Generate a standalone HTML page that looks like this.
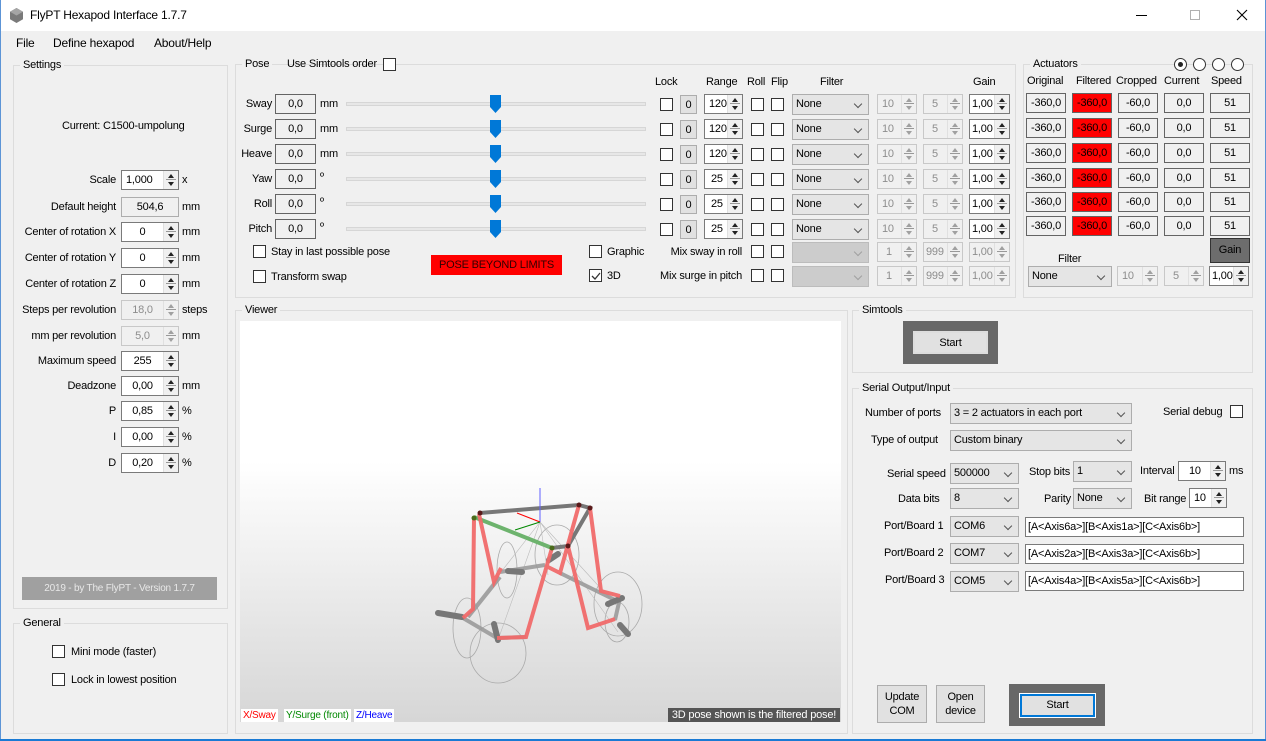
<!DOCTYPE html>
<html><head><meta charset="utf-8"><style>
*{box-sizing:border-box}
body{margin:0;width:1266px;height:741px;background:#f0f0f0;font:11px "Liberation Sans",sans-serif;letter-spacing:-0.2px;position:relative;overflow:hidden;color:#000}
.a{position:absolute;white-space:nowrap;line-height:14px}
.r{text-align:right}
.g{position:absolute;border:1px solid #dcdcdc}
.gt{position:absolute;top:-8px;left:6px;background:#f0f0f0;padding:0 3px;line-height:14px;white-space:nowrap}
.in{position:absolute;height:20px;border:1px solid #7a7a7a;background:#fff;line-height:18px;padding-left:4px;white-space:nowrap}
.c{text-align:center;padding-left:0}
.ro{background:#f0f0f0;border-color:#646464;text-align:center;padding:0}
.dis{background:#f0f0f0;border-color:#c8c8c8;color:#8d8d8d}
.sp{position:absolute;right:0;top:0;width:15px;height:18px;background:#f0f0f0;border-left:1px solid #e0e0e0}
.sp:before{content:"";position:absolute;left:4px;top:3px;border:3px solid transparent;border-bottom:4px solid #222;border-top:0}
.sp:after{content:"";position:absolute;left:4px;bottom:3px;border:3px solid transparent;border-top:4px solid #222;border-bottom:0}
.sp i{position:absolute;left:2px;right:2px;top:8px;height:1px;background:#999}
.dis .sp:before{border-bottom-color:#a0a0a0}.dis .sp:after{border-top-color:#a0a0a0}
.cb{position:absolute;width:13px;height:13px;border:1px solid #333;background:#fff}
.cmb{position:absolute;height:21px;border:1px solid #adadad;background:#e5e5e5;line-height:19px;padding-left:3px;white-space:nowrap}
.cmb:after{content:"";position:absolute;right:7px;top:6px;width:5px;height:5px;border-right:1px solid #555;border-bottom:1px solid #555;transform:rotate(45deg)}
.cmbd{background:#cccccc;border-color:#bcbcbc}
.cmbd:after{border-color:#a0a0a0}
.b0{position:absolute;width:17px;height:19px;border:1px solid #adadad;background:#e1e1e1;text-align:center;line-height:19px}
.trk{position:absolute;left:346px;width:300px;height:4px;background:#e7e7e7;border:1px solid #d6d6d6}
.th{position:absolute;left:490px}
.btn{position:absolute;border:1px solid #adadad;background:#e1e1e1;text-align:center;line-height:14px}
.rad{position:absolute;width:13px;height:13px;border:1px solid #333;border-radius:50%;background:#fff;top:58px}
</style></head><body>
<div class="a" style="left:0;top:0;width:1266px;height:31px;background:#fff"></div>
<svg class="a" style="left:9px;top:8px" width="15" height="15"><polygon points="7.5,0 14,3.8 14,11.2 7.5,15 1,11.2 1,3.8" fill="#7a7a7a"/><polygon points="7.5,0 14,3.8 7.5,7.5 1,3.8" fill="#a5a5a5"/></svg>
<div class="a" style="left:30px;top:8px;font-size:12px">FlyPT Hexapod Interface 1.7.7</div>
<div class="a" style="left:1136px;top:15px;width:11px;height:1px;background:#000"></div>
<div class="a" style="left:1190px;top:10px;width:10px;height:10px;border:1px solid #b0b0b0"></div>
<svg class="a" style="left:1236px;top:9px" width="12" height="12"><path d="M1 1L11 11M11 1L1 11" stroke="#000" stroke-width="1.1"/></svg>
<div class="a" style="left:0;top:0;width:1px;height:741px;background:#5c94d6"></div>
<div class="a" style="right:0;top:0;width:1px;height:741px;background:#5c94d6"></div>
<div class="a" style="left:0;top:739px;width:1266px;height:2px;background:#1a7ad4"></div>
<div class="a" style="left:16px;top:36px;font-size:12px">File</div>
<div class="a" style="left:53px;top:36px;font-size:12px">Define hexapod</div>
<div class="a" style="left:154px;top:36px;font-size:12px">About/Help</div>

<div class="g" style="left:13px;top:65px;width:215px;height:544px"><div class="gt">Settings</div></div>
<div class="a" style="left:62px;top:119px">Current: C1500-umpolung</div>
<div class="a r" style="left:14px;top:173px;width:102px">Scale</div>
<div class="in" style="left:121px;top:170px;width:58px">1,000<div class="sp"><i></i></div></div><div class="a" style="left:182px;top:173px">x</div>
<div class="a r" style="left:14px;top:200px;width:102px">Default height</div>
<div class="in ro" style="left:121px;top:197px;width:58px;border-color:#adadad">504,6</div><div class="a" style="left:182px;top:200px">mm</div>
<div class="a r" style="left:14px;top:225px;width:102px">Center of rotation X</div>
<div class="in c" style="left:121px;top:222px;width:58px;padding-right:15px">0<div class="sp"><i></i></div></div><div class="a" style="left:182px;top:225px">mm</div>
<div class="a r" style="left:14px;top:251px;width:102px">Center of rotation Y</div>
<div class="in c" style="left:121px;top:248px;width:58px;padding-right:15px">0<div class="sp"><i></i></div></div><div class="a" style="left:182px;top:251px">mm</div>
<div class="a r" style="left:14px;top:277px;width:102px">Center of rotation Z</div>
<div class="in c" style="left:121px;top:274px;width:58px;padding-right:15px">0<div class="sp"><i></i></div></div><div class="a" style="left:182px;top:277px">mm</div>
<div class="a r" style="left:14px;top:303px;width:102px">Steps per revolution</div>
<div class="in c dis" style="left:121px;top:300px;width:58px;padding-right:15px">18,0<div class="sp"><i></i></div></div><div class="a" style="left:182px;top:303px">steps</div>
<div class="a r" style="left:14px;top:329px;width:102px">mm per revolution</div>
<div class="in c dis" style="left:121px;top:326px;width:58px;padding-right:15px">5,0<div class="sp"><i></i></div></div><div class="a" style="left:182px;top:329px">mm</div>
<div class="a r" style="left:14px;top:354px;width:102px">Maximum speed</div>
<div class="in c" style="left:121px;top:351px;width:58px;padding-right:15px">255<div class="sp"><i></i></div></div>
<div class="a r" style="left:14px;top:379px;width:102px">Deadzone</div>
<div class="in c" style="left:121px;top:376px;width:58px;padding-right:15px">0,00<div class="sp"><i></i></div></div><div class="a" style="left:182px;top:379px">mm</div>
<div class="a r" style="left:14px;top:404px;width:102px">P</div>
<div class="in c" style="left:121px;top:401px;width:58px;padding-right:15px">0,85<div class="sp"><i></i></div></div><div class="a" style="left:182px;top:404px">%</div>
<div class="a r" style="left:14px;top:430px;width:102px">I</div>
<div class="in c" style="left:121px;top:427px;width:58px;padding-right:15px">0,00<div class="sp"><i></i></div></div><div class="a" style="left:182px;top:430px">%</div>
<div class="a r" style="left:14px;top:456px;width:102px">D</div>
<div class="in c" style="left:121px;top:453px;width:58px;padding-right:15px">0,20<div class="sp"><i></i></div></div><div class="a" style="left:182px;top:456px">%</div>
<div class="a" style="left:22px;top:577px;width:195px;height:23px;background:#a0a0a0;color:#e8e8e8;text-align:center;line-height:23px;font-size:10px">2019 - by The FlyPT - Version 1.7.7</div>

<div class="g" style="left:13px;top:623px;width:215px;height:111px"><div class="gt">General</div></div>
<div class="cb" style="left:52px;top:645px"></div><div class="a" style="left:71px;top:645px">Mini mode (faster)</div>
<div class="cb" style="left:52px;top:673px"></div><div class="a" style="left:71px;top:673px">Lock in lowest position</div>

<div class="g" style="left:235px;top:64px;width:781px;height:234px"><div class="gt">Pose</div></div>
<div class="a" style="left:287px;top:57px">Use Simtools order</div>
<div class="cb" style="left:383px;top:58px"></div>
<div class="a" style="left:655px;top:75px">Lock</div>
<div class="a" style="left:706px;top:75px">Range</div>
<div class="a" style="left:747px;top:75px">Roll</div>
<div class="a" style="left:771px;top:75px">Flip</div>
<div class="a" style="left:820px;top:75px">Filter</div>
<div class="a" style="left:973px;top:75px">Gain</div>

<div class="a r" style="left:235px;top:97px;width:37px">Sway</div>
<div class="in ro" style="left:275px;top:94px;width:41px">0,0</div><div class="a" style="left:320px;top:97px">mm</div>
<div class="trk" style="top:102px"></div>
<svg class="th" style="top:95px" width="11" height="18"><path d="M0 0H11V12L5.5 18L0 12Z" fill="#0078d7"/></svg>
<div class="cb" style="left:660px;top:98px"></div><div class="b0" style="left:680px;top:95px">0</div>
<div class="in" style="left:704px;top:94px;width:39px">120<div class="sp"><i></i></div></div>
<div class="cb" style="left:751px;top:98px"></div><div class="cb" style="left:771px;top:98px"></div>
<div class="cmb" style="left:792px;top:94px;width:77px">None</div>
<div class="in dis" style="left:877px;top:94px;width:40px">10<div class="sp"><i></i></div></div>
<div class="in dis" style="left:923px;top:94px;width:40px;padding-left:8px">5<div class="sp"><i></i></div></div>
<div class="in" style="left:969px;top:94px;width:41px;padding-left:2px">1,00<div class="sp"><i></i></div></div>

<div class="a r" style="left:235px;top:122px;width:37px">Surge</div>
<div class="in ro" style="left:275px;top:119px;width:41px">0,0</div><div class="a" style="left:320px;top:122px">mm</div>
<div class="trk" style="top:127px"></div>
<svg class="th" style="top:120px" width="11" height="18"><path d="M0 0H11V12L5.5 18L0 12Z" fill="#0078d7"/></svg>
<div class="cb" style="left:660px;top:123px"></div><div class="b0" style="left:680px;top:120px">0</div>
<div class="in" style="left:704px;top:119px;width:39px">120<div class="sp"><i></i></div></div>
<div class="cb" style="left:751px;top:123px"></div><div class="cb" style="left:771px;top:123px"></div>
<div class="cmb" style="left:792px;top:119px;width:77px">None</div>
<div class="in dis" style="left:877px;top:119px;width:40px">10<div class="sp"><i></i></div></div>
<div class="in dis" style="left:923px;top:119px;width:40px;padding-left:8px">5<div class="sp"><i></i></div></div>
<div class="in" style="left:969px;top:119px;width:41px;padding-left:2px">1,00<div class="sp"><i></i></div></div>

<div class="a r" style="left:235px;top:147px;width:37px">Heave</div>
<div class="in ro" style="left:275px;top:144px;width:41px">0,0</div><div class="a" style="left:320px;top:147px">mm</div>
<div class="trk" style="top:152px"></div>
<svg class="th" style="top:145px" width="11" height="18"><path d="M0 0H11V12L5.5 18L0 12Z" fill="#0078d7"/></svg>
<div class="cb" style="left:660px;top:148px"></div><div class="b0" style="left:680px;top:145px">0</div>
<div class="in" style="left:704px;top:144px;width:39px">120<div class="sp"><i></i></div></div>
<div class="cb" style="left:751px;top:148px"></div><div class="cb" style="left:771px;top:148px"></div>
<div class="cmb" style="left:792px;top:144px;width:77px">None</div>
<div class="in dis" style="left:877px;top:144px;width:40px">10<div class="sp"><i></i></div></div>
<div class="in dis" style="left:923px;top:144px;width:40px;padding-left:8px">5<div class="sp"><i></i></div></div>
<div class="in" style="left:969px;top:144px;width:41px;padding-left:2px">1,00<div class="sp"><i></i></div></div>

<div class="a r" style="left:235px;top:172px;width:37px">Yaw</div>
<div class="in ro" style="left:275px;top:169px;width:41px">0,0</div><div class="a" style="left:320px;top:170px">º</div>
<div class="trk" style="top:177px"></div>
<svg class="th" style="top:170px" width="11" height="18"><path d="M0 0H11V12L5.5 18L0 12Z" fill="#0078d7"/></svg>
<div class="cb" style="left:660px;top:173px"></div><div class="b0" style="left:680px;top:170px">0</div>
<div class="in" style="left:704px;top:169px;width:39px;padding-left:6px">25<div class="sp"><i></i></div></div>
<div class="cb" style="left:751px;top:173px"></div><div class="cb" style="left:771px;top:173px"></div>
<div class="cmb" style="left:792px;top:169px;width:77px">None</div>
<div class="in dis" style="left:877px;top:169px;width:40px">10<div class="sp"><i></i></div></div>
<div class="in dis" style="left:923px;top:169px;width:40px;padding-left:8px">5<div class="sp"><i></i></div></div>
<div class="in" style="left:969px;top:169px;width:41px;padding-left:2px">1,00<div class="sp"><i></i></div></div>

<div class="a r" style="left:235px;top:197px;width:37px">Roll</div>
<div class="in ro" style="left:275px;top:194px;width:41px">0,0</div><div class="a" style="left:320px;top:195px">º</div>
<div class="trk" style="top:202px"></div>
<svg class="th" style="top:195px" width="11" height="18"><path d="M0 0H11V12L5.5 18L0 12Z" fill="#0078d7"/></svg>
<div class="cb" style="left:660px;top:198px"></div><div class="b0" style="left:680px;top:195px">0</div>
<div class="in" style="left:704px;top:194px;width:39px;padding-left:6px">25<div class="sp"><i></i></div></div>
<div class="cb" style="left:751px;top:198px"></div><div class="cb" style="left:771px;top:198px"></div>
<div class="cmb" style="left:792px;top:194px;width:77px">None</div>
<div class="in dis" style="left:877px;top:194px;width:40px">10<div class="sp"><i></i></div></div>
<div class="in dis" style="left:923px;top:194px;width:40px;padding-left:8px">5<div class="sp"><i></i></div></div>
<div class="in" style="left:969px;top:194px;width:41px;padding-left:2px">1,00<div class="sp"><i></i></div></div>

<div class="a r" style="left:235px;top:222px;width:37px">Pitch</div>
<div class="in ro" style="left:275px;top:219px;width:41px">0,0</div><div class="a" style="left:320px;top:220px">º</div>
<div class="trk" style="top:227px"></div>
<svg class="th" style="top:220px" width="11" height="18"><path d="M0 0H11V12L5.5 18L0 12Z" fill="#0078d7"/></svg>
<div class="cb" style="left:660px;top:223px"></div><div class="b0" style="left:680px;top:220px">0</div>
<div class="in" style="left:704px;top:219px;width:39px;padding-left:6px">25<div class="sp"><i></i></div></div>
<div class="cb" style="left:751px;top:223px"></div><div class="cb" style="left:771px;top:223px"></div>
<div class="cmb" style="left:792px;top:219px;width:77px">None</div>
<div class="in dis" style="left:877px;top:219px;width:40px">10<div class="sp"><i></i></div></div>
<div class="in dis" style="left:923px;top:219px;width:40px;padding-left:8px">5<div class="sp"><i></i></div></div>
<div class="in" style="left:969px;top:219px;width:41px;padding-left:2px">1,00<div class="sp"><i></i></div></div>

<div class="cb" style="left:253px;top:245px"></div><div class="a" style="left:271px;top:245px">Stay in last possible pose</div>
<div class="cb" style="left:253px;top:270px"></div><div class="a" style="left:271px;top:270px">Transform swap</div>
<div class="a" style="left:431px;top:255px;width:131px;height:20px;background:#ff0000;color:#300;text-align:center;line-height:20px">POSE BEYOND LIMITS</div>
<div class="cb" style="left:589px;top:245px"></div><div class="a" style="left:607px;top:245px">Graphic</div>
<div class="cb" style="left:589px;top:269px"></div>
<svg class="a" style="left:590px;top:270px" width="12" height="12"><path d="M2 6L5 9L10 3" stroke="#333" stroke-width="1.3" fill="none"/></svg>
<div class="a" style="left:607px;top:269px">3D</div>
<div class="a r" style="left:640px;top:245px;width:102px">Mix sway in roll</div>
<div class="cb" style="left:751px;top:245px"></div><div class="cb" style="left:771px;top:245px"></div>
<div class="cmb cmbd" style="left:792px;top:242px;width:77px"></div>
<div class="in dis" style="left:877px;top:242px;width:40px;padding-left:8px">1<div class="sp"><i></i></div></div>
<div class="in dis" style="left:923px;top:242px;width:40px;padding-left:2px">999<div class="sp"><i></i></div></div>
<div class="in dis" style="left:969px;top:242px;width:41px;padding-left:2px">1,00<div class="sp"><i></i></div></div>
<div class="a r" style="left:640px;top:269px;width:102px">Mix surge in pitch</div>
<div class="cb" style="left:751px;top:269px"></div><div class="cb" style="left:771px;top:269px"></div>
<div class="cmb cmbd" style="left:792px;top:266px;width:77px"></div>
<div class="in dis" style="left:877px;top:266px;width:40px;padding-left:8px">1<div class="sp"><i></i></div></div>
<div class="in dis" style="left:923px;top:266px;width:40px;padding-left:2px">999<div class="sp"><i></i></div></div>
<div class="in dis" style="left:969px;top:266px;width:41px;padding-left:2px">1,00<div class="sp"><i></i></div></div>

<div class="g" style="left:1023px;top:64px;width:230px;height:234px"><div class="gt">Actuators</div></div>
<div class="rad" style="left:1174px"></div><div class="a" style="left:1178px;top:62px;width:5px;height:5px;border-radius:50%;background:#222"></div>
<div class="rad" style="left:1193px"></div><div class="rad" style="left:1212px"></div><div class="rad" style="left:1231px"></div>
<div class="a" style="left:1027px;top:74px">Original</div>
<div class="a" style="left:1076px;top:74px">Filtered</div>
<div class="a" style="left:1116px;top:74px">Cropped</div>
<div class="a" style="left:1164px;top:74px">Current</div>
<div class="a" style="left:1211px;top:74px">Speed</div>

<div class="in ro" style="left:1026px;top:93px;width:40px">-360,0</div><div class="in ro" style="left:1072px;top:93px;width:40px;background:#f00">-360,0</div><div class="in ro" style="left:1118px;top:93px;width:40px">-60,0</div><div class="in ro" style="left:1164px;top:93px;width:40px">0,0</div><div class="in ro" style="left:1210px;top:93px;width:40px">51</div>
<div class="in ro" style="left:1026px;top:118px;width:40px">-360,0</div><div class="in ro" style="left:1072px;top:118px;width:40px;background:#f00">-360,0</div><div class="in ro" style="left:1118px;top:118px;width:40px">-60,0</div><div class="in ro" style="left:1164px;top:118px;width:40px">0,0</div><div class="in ro" style="left:1210px;top:118px;width:40px">51</div>
<div class="in ro" style="left:1026px;top:143px;width:40px">-360,0</div><div class="in ro" style="left:1072px;top:143px;width:40px;background:#f00">-360,0</div><div class="in ro" style="left:1118px;top:143px;width:40px">-60,0</div><div class="in ro" style="left:1164px;top:143px;width:40px">0,0</div><div class="in ro" style="left:1210px;top:143px;width:40px">51</div>
<div class="in ro" style="left:1026px;top:168px;width:40px">-360,0</div><div class="in ro" style="left:1072px;top:168px;width:40px;background:#f00">-360,0</div><div class="in ro" style="left:1118px;top:168px;width:40px">-60,0</div><div class="in ro" style="left:1164px;top:168px;width:40px">0,0</div><div class="in ro" style="left:1210px;top:168px;width:40px">51</div>
<div class="in ro" style="left:1026px;top:192px;width:40px">-360,0</div><div class="in ro" style="left:1072px;top:192px;width:40px;background:#f00">-360,0</div><div class="in ro" style="left:1118px;top:192px;width:40px">-60,0</div><div class="in ro" style="left:1164px;top:192px;width:40px">0,0</div><div class="in ro" style="left:1210px;top:192px;width:40px">51</div>
<div class="in ro" style="left:1026px;top:216px;width:40px">-360,0</div><div class="in ro" style="left:1072px;top:216px;width:40px;background:#f00">-360,0</div><div class="in ro" style="left:1118px;top:216px;width:40px">-60,0</div><div class="in ro" style="left:1164px;top:216px;width:40px">0,0</div><div class="in ro" style="left:1210px;top:216px;width:40px">51</div>
<div class="a" style="left:1210px;top:238px;width:40px;height:25px;background:#6d6d6d;border:1px solid #333;text-align:center;line-height:23px">Gain</div>
<div class="a" style="left:1058px;top:252px">Filter</div>
<div class="cmb" style="left:1028px;top:266px;width:84px">None</div>
<div class="in dis" style="left:1117px;top:266px;width:41px">10<div class="sp"><i></i></div></div>
<div class="in dis" style="left:1164px;top:266px;width:40px;padding-left:8px">5<div class="sp"><i></i></div></div>
<div class="in" style="left:1209px;top:266px;width:40px;padding-left:2px">1,00<div class="sp"><i></i></div></div>

<div class="g" style="left:235px;top:310px;width:613px;height:424px"><div class="gt">Viewer</div></div>
<div class="a" style="left:240px;top:321px;width:601px;height:401px;background:linear-gradient(#fff 0%,#fff 35%,#d6d6d6 100%)"></div>
<svg class="a" style="left:240px;top:321px" width="601" height="401" viewBox="240 321 601 401">
<g fill="none" stroke="#aaa" stroke-width="0.8">
<ellipse cx="507" cy="570" rx="10" ry="28"/><ellipse cx="467" cy="628" rx="14" ry="30"/><ellipse cx="498" cy="653" rx="28" ry="30"/>
<ellipse cx="557" cy="555" rx="22" ry="30"/><ellipse cx="618" cy="604" rx="24" ry="32"/><ellipse cx="617" cy="622" rx="12" ry="20"/>
</g>
<g stroke="#bbb" stroke-width="0.6"><path d="M540 522L466 617M540 522L498 640M540 522L505 567M540 522L548 575M540 522L616 605M540 522L618 632"/></g>
<g stroke="#9a9a9a" stroke-width="4" opacity="0.9" fill="none"><path d="M468 617L500 577M500 572L545 565M560 573L615 600M620 598L615 620M498 638L526 637M463 618L497 638"/></g>
<g stroke="#777" stroke-width="6" stroke-linecap="round"><path d="M438 613L462 617M494 624L498 640M508 571L522 572M549 560L558 554M608 604L622 598M620 625L628 634"/></g>
<g stroke="#777" stroke-width="4" fill="none"><path d="M480 513L579 505L590 508L568 546L552 548"/></g>
<path d="M474 517L552 548" stroke="#6db36d" stroke-width="4"/>
<g stroke="#f06a6a" stroke-width="4" fill="none" opacity="0.95"><path d="M479 514L494 582L501 568M474 518L473 609L463 618M552 548L526 637L497 638M568 546L588 628L615 619M590 508L601 591L620 596M579 505L560 573L546 566"/></g>
<path d="M540 488V522" stroke="#6060ff" stroke-width="1"/><path d="M517 513L540 522" stroke="#f00" stroke-width="1"/><path d="M515 530L540 522" stroke="#080" stroke-width="1"/>
<g fill="#5a1a1a"><circle cx="480" cy="513" r="2.5"/><circle cx="579" cy="505" r="2.5"/><circle cx="590" cy="508" r="2.5"/><circle cx="568" cy="546" r="2.5"/></g>
<g fill="#4a6a1a"><circle cx="474" cy="518" r="2.5"/><circle cx="552" cy="548" r="2.5"/></g>
</svg>
<div class="a" style="left:241px;top:709px;background:#fff;color:#f00;font-size:10px;line-height:13px;padding:0 2px">X/Sway</div>
<div class="a" style="left:284px;top:709px;background:#fff;color:#080;font-size:10px;line-height:13px;padding:0 2px">Y/Surge (front)</div>
<div class="a" style="left:354px;top:709px;background:#fff;color:#00f;font-size:10px;line-height:13px;padding:0 2px">Z/Heave</div>
<div class="a" style="left:668px;top:708px;width:172px;background:#555;color:#fff;font-size:11px;line-height:14px;text-align:center">3D pose shown is the filtered pose!</div>

<div class="g" style="left:852px;top:310px;width:401px;height:63px"><div class="gt">Simtools</div></div>
<div class="a" style="left:903px;top:321px;width:95px;height:43px;background:#686868"></div>
<div class="btn" style="left:913px;top:331px;width:75px;height:23px;line-height:21px;border:2px solid #ddd">Start</div>

<div class="g" style="left:852px;top:388px;width:401px;height:346px"><div class="gt">Serial Output/Input</div></div>
<div class="a" style="left:865px;top:406px">Number of ports</div>
<div class="cmb" style="left:950px;top:403px;width:182px">3 = 2 actuators in each port</div>
<div class="a" style="left:1163px;top:405px">Serial debug</div><div class="cb" style="left:1230px;top:405px"></div>
<div class="a" style="left:871px;top:433px">Type of output</div>
<div class="cmb" style="left:950px;top:430px;width:182px">Custom binary</div>
<div class="a" style="left:887px;top:467px">Serial speed</div>
<div class="cmb" style="left:950px;top:463px;width:69px">500000</div>
<div class="a" style="left:1029px;top:465px">Stop bits</div>
<div class="cmb" style="left:1073px;top:461px;width:59px">1</div>
<div class="a" style="left:1140px;top:464px">Interval</div>
<div class="in" style="left:1178px;top:461px;width:48px;padding-left:10px">10<div class="sp"><i></i></div></div>
<div class="a" style="left:1229px;top:464px">ms</div>
<div class="a" style="left:898px;top:492px">Data bits</div>
<div class="cmb" style="left:950px;top:488px;width:69px">8</div>
<div class="a" style="left:1044px;top:492px">Parity</div>
<div class="cmb" style="left:1073px;top:488px;width:59px">None</div>
<div class="a" style="left:1144px;top:492px">Bit range</div>
<div class="in" style="left:1189px;top:488px;width:38px;padding-left:4px">10<div class="sp"><i></i></div></div>
<div class="a" style="left:884px;top:519px">Port/Board 1</div>
<div class="cmb" style="left:950px;top:516px;width:69px">COM6</div>
<div class="in" style="left:1025px;top:517px;width:219px;padding-left:2px">[A&lt;Axis6a&gt;][B&lt;Axis1a&gt;][C&lt;Axis6b&gt;]</div>
<div class="a" style="left:884px;top:546px">Port/Board 2</div>
<div class="cmb" style="left:950px;top:543px;width:69px">COM7</div>
<div class="in" style="left:1025px;top:544px;width:219px;padding-left:2px">[A&lt;Axis2a&gt;][B&lt;Axis3a&gt;][C&lt;Axis6b&gt;]</div>
<div class="a" style="left:885px;top:573px">Port/Board 3</div>
<div class="cmb" style="left:950px;top:571px;width:69px">COM5</div>
<div class="in" style="left:1025px;top:571px;width:219px;padding-left:2px">[A&lt;Axis4a&gt;][B&lt;Axis5a&gt;][C&lt;Axis6b&gt;]</div>
<div class="btn" style="left:877px;top:685px;width:50px;height:38px;padding-top:4px">Update<br>COM</div>
<div class="btn" style="left:936px;top:685px;width:49px;height:38px;padding-top:4px">Open<br>device</div>
<div class="a" style="left:1009px;top:684px;width:96px;height:42px;background:#686868"></div>
<div class="btn" style="left:1020px;top:694px;width:75px;height:23px;line-height:19px;border:2px solid #0078d7;outline:1px solid #fff">Start</div>
</body></html>
